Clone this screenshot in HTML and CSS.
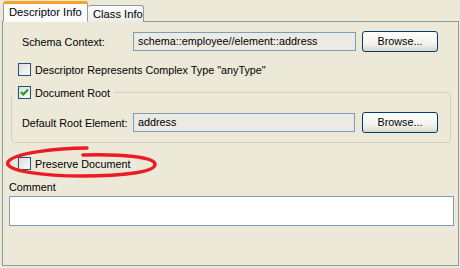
FILE: index.html
```html
<!DOCTYPE html>
<html>
<head>
<meta charset="utf-8">
<link rel="stylesheet" href="styles.css">
</head>
<body>
<div class="window">
  <div class="tabs">
    <div class="tab active">Descriptor Info</div>
    <div class="tab other">Class Info</div>
  </div>
  <div class="panel">
    <div class="row first">
      <span class="label">Schema Context:</span>
      <div class="field">schema::employee//element::address</div>
      <div class="button">Browse...</div>
    </div>
    <div class="check-row cr1">
      <span class="checkbox"></span>
      <span>Descriptor Represents Complex Type "anyType"</span>
    </div>
    <fieldset class="group">
      <legend class="check-row legend">
        <span class="checkbox checked">
          <svg width="11" height="11" viewBox="0 0 11 11"><path d="M2 5 L4.3 7.5 L9 2.5" fill="none" stroke="#21a121" stroke-width="2.2"/></svg>
        </span>
        <span>Document Root</span>
      </legend>
      <div class="row inner">
        <span class="label">Default Root Element:</span>
        <div class="field f2">address</div>
        <div class="button">Browse...</div>
      </div>
    </fieldset>
    <div class="check-row cr3">
      <span class="checkbox"></span>
      <span>Preserve Document</span>
    </div>
    <div class="comment-label">Comment</div>
    <div class="textarea"></div>
  </div>
  <svg class="ellipse" width="160" height="40" viewBox="0 0 160 40">
    <path d="M84 3 C55 3 10 8 5 17 C1 26 40 31 80 31 C120 31 153 27 152 19 C151 12 120 9 80 10" fill="none" stroke="#ec1c24" stroke-width="3.5" stroke-linecap="round"/>
  </svg>
</div>
</body>
</html>
```
FILE: styles.css
```css
html, body {
  margin: 0;
  padding: 0;
}
body {
  width: 460px;
  height: 268px;
  background: #ece9d8;
  font-family: "Liberation Sans", Arial, sans-serif;
  font-size: 10.8px;
  color: #000;
  overflow: hidden;
}
.window {
  position: relative;
  padding: 2px 1px 0 2px;
  height: 266px;
}
.tabs {
  display: flex;
  align-items: flex-end;
  padding-left: 1px;
  height: 20px;
  margin-bottom: -1px;
  position: relative;
  z-index: 2;
}
.tab {
  box-sizing: border-box;
  white-space: nowrap;
  height: 17px;
  border: 1px solid #919b9c;
  border-bottom: none;
  border-radius: 3px 3px 0 0;
  background: linear-gradient(#fefefe, #ecebe6);
  line-height: 15px;
  font-size: 11.2px;
}
.tab.active {
  width: 85px;
  height: 21px;
  padding: 1px 0 0 5px;
  border-top: 3px solid #f3a428;
  background: #fcfcfe;
  border-bottom: 1px solid #fcfcfe;
}
.tab.other {
  width: 56px;
  padding: 1px 0 0 5px;
  border-left: none;
}
.panel {
  box-sizing: border-box;
  height: 245px;
  border: 1px solid #919b9c;
  background: #ece9d8;
  padding: 9px 5px 0 6px;
}
.row {
  display: flex;
  align-items: center;
  height: 21px;
}
.label {
  width: 111px;
  padding-left: 13px;
  white-space: nowrap;
}
.field {
  box-sizing: border-box;
  width: 223px;
  height: 19px;
  border: 1px solid #7f9db9;
  background: #ebebe4;
  padding: 0 0 0 4px;
  line-height: 17px;
  white-space: nowrap;
}
.button {
  box-sizing: border-box;
  width: 76px;
  height: 21px;
  margin-left: 6px;
  border: 1px solid #003c74;
  border-radius: 3px;
  background: linear-gradient(#fefefd 0%, #f4f3ee 60%, #dcd9cb 100%);
  text-align: center;
  line-height: 19px;
}
.check-row {
  display: flex;
  align-items: center;
  height: 13px;
  padding-left: 9px;
  white-space: nowrap;
}
.checkbox {
  box-sizing: border-box;
  width: 13px;
  height: 13px;
  border: 1px solid #1c5180;
  background: linear-gradient(135deg, #dcdcd7, #fbfbf9);
  margin-right: 4px;
  display: flex;
  align-items: center;
  justify-content: center;
}
.cr1 {
  margin-top: 11px;
}
.group {
  margin: 10px 0 0 2px;
  width: 440px;
  box-sizing: border-box;
  border: 1px solid #d0d0bf;
  border-radius: 4px;
  padding: 0 0 10px 0;
  height: 57px;
}
.legend {
  padding: 0 4px 0 6px;
  margin-left: 0;
}
.row.inner {
  margin-top: 13px;
  margin-left: -3px;
}
.f2 {
  width: 222px;
  margin-right: 1px;
}
.cr3 {
  margin-top: 14px;
}
.comment-label {
  margin-top: 11px;
  padding-left: 0;
  height: 13px;
  line-height: 13px;
}
.textarea {
  box-sizing: border-box;
  margin-top: 2px;
  width: 445px;
  height: 30px;
  border: 1px solid #7f9db9;
  background: #fff;
}
.ellipse {
  position: absolute;
  left: 3px;
  top: 145px;
}
```
